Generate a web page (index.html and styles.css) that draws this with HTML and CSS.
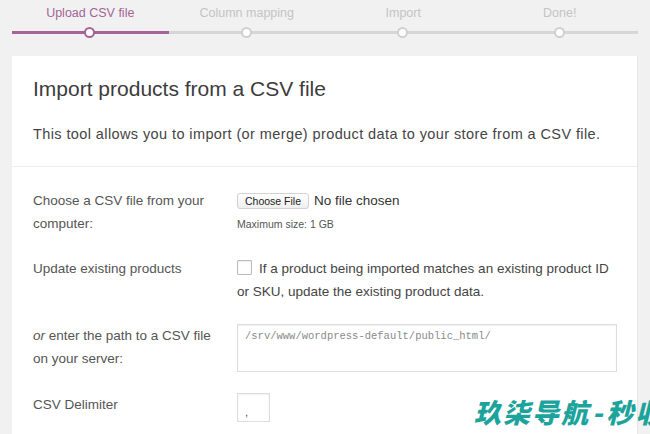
FILE: index.html
```html
<!DOCTYPE html>
<html lang="en">
<head>
  <meta charset="UTF-8">
  <meta name="viewport" content="width=device-width, initial-scale=1.0">
  <title>Import products from a CSV file</title>
  <link rel="stylesheet" href="styles.css">
</head>
<body>
  <ol class="steps">
    <li class="step active"><span class="step-label">Upload CSV file</span><span class="step-dot"></span></li>
    <li class="step"><span class="step-label">Column mapping</span><span class="step-dot"></span></li>
    <li class="step"><span class="step-label">Import</span><span class="step-dot"></span></li>
    <li class="step"><span class="step-label">Done!</span><span class="step-dot"></span></li>
  </ol>
  <div class="card">
    <div class="card-head">
      <h2>Import products from a CSV file</h2>
      <p>This tool allows you to import (or merge) product data to your store from a CSV file.</p>
    </div>
    <div class="form">
      <div class="label">Choose a CSV file from your computer:</div>
      <div class="field">
        <div class="file-line"><button class="file-btn">Choose File</button><span class="file-name">No file chosen</span></div>
        <div class="hint">Maximum size: 1 GB</div>
      </div>
      <div class="label">Update existing products</div>
      <div class="field text">
        <span class="checkbox"></span>If a product being imported matches an existing product ID or SKU, update the existing product data.
      </div>
      <div class="label"><em>or</em> enter the path to a CSV file on your server:</div>
      <div class="field">
        <textarea class="path" placeholder="/srv/www/wordpress-default/public_html/"></textarea>
      </div>
      <div class="label">CSV Delimiter</div>
      <div class="field">
        <input class="delim" type="text" value=",">
      </div>
    </div>
  </div>
  <div class="watermark">玖柒导航<span class="dash">-</span>秒收</div>
</body>
</html>
```

FILE: styles.css
```css
html, body {
  height: 100%;
}
body {
  margin: 0;
  padding: 0 12px;
  background-color: #f1f1f1;
  font-family: "Liberation Sans", Arial, sans-serif;
  color: #444;
  overflow: hidden;
  position: relative;
}
.steps {
  display: grid;
  grid-template-columns: repeat(4, 1fr);
  list-style: none;
  margin: 0;
  padding: 0;
  height: 56px;
}
.step {
  position: relative;
  text-align: center;
  height: 34px;
  border-bottom: 3px solid #d6d6d6;
  box-sizing: border-box;
}
.step-label {
  display: block;
  padding-top: 6px;
  font-size: 12.5px;
  color: #c4c4c4;
}
.step-dot {
  position: absolute;
  left: 50%;
  bottom: -7px;
  width: 7px;
  height: 7px;
  margin-left: -6px;
  border: 2.5px solid #d0d0d0;
  border-radius: 50%;
  background-color: #fff;
}
.step.active {
  border-bottom-color: #a46497;
}
.step.active .step-label {
  color: #a46497;
}
.step.active .step-dot {
  border-color: #a46497;
}
.card {
  background-color: #fff;
  border-right: 1px solid #e6e6e6;
  height: 378px;
}
.card-head {
  padding: 19px 21px 22px;
  border-bottom: 1px solid #eee;
}
.card-head h2 {
  margin: 0;
  font-size: 21px;
  font-weight: normal;
  line-height: 28px;
  color: #3c3c3c;
}
.card-head p {
  margin: 21px 0 0;
  font-size: 14.5px;
  letter-spacing: 0.4px;
  line-height: 20px;
  color: #444;
}
.form {
  display: grid;
  grid-template-columns: 204px 380px;
  row-gap: 21px;
  padding: 22px 21px 0;
  font-size: 13.5px;
  line-height: 23px;
  color: #555;
}
.label {
  padding-right: 16px;
}
.field {
  color: #444;
}
.file-line {
  display: flex;
  align-items: center;
  height: 23px;
}
.file-btn {
  font-family: "Liberation Sans", Arial, sans-serif;
  font-size: 10.5px;
  height: 16px;
  padding: 0 7px;
  margin: 0 5px 0 0;
  border: 1px solid #d2d2d2;
  border-radius: 3px;
  background: linear-gradient(#fff, #efefef);
  color: #222;
  line-height: 14px;
}
.file-name {
  font-size: 13.5px;
  color: #333;
}
.hint {
  font-size: 10.5px;
  line-height: 24px;
  color: #555;
}
.checkbox {
  display: inline-block;
  width: 13px;
  height: 13px;
  border: 1px solid #bbb;
  border-radius: 1px;
  box-shadow: inset 0 1px 2px rgba(0, 0, 0, 0.08);
  vertical-align: -2px;
  margin-right: 7px;
}
.path {
  display: block;
  width: 380px;
  height: 48px;
  box-sizing: border-box;
  margin: 0;
  padding: 5px 7px;
  border: 1px solid #ddd;
  box-shadow: inset 0 1px 2px rgba(0, 0, 0, 0.06);
  font-family: "Liberation Mono", monospace;
  font-size: 10.5px;
  resize: none;
}
.path::placeholder {
  color: #8a8a8a;
}
.delim {
  display: block;
  width: 33px;
  height: 29px;
  box-sizing: border-box;
  margin: 0;
  padding: 8px 0 0 7px;
  border: 1px solid #ddd;
  box-shadow: inset 0 1px 2px rgba(0, 0, 0, 0.06);
  font-family: "Liberation Sans", Arial, sans-serif;
  font-size: 11px;
  color: #444;
  text-align: left;
}
.watermark {
  position: absolute;
  left: 474px;
  top: 392px;
  white-space: nowrap;
  font-family: "Noto Sans CJK SC", sans-serif;
  font-size: 27px;
  font-weight: 900;
  font-style: italic;
  color: #1ca39c;
  letter-spacing: 2px;
}
.watermark .dash {
  padding: 0 2px;
}
```
